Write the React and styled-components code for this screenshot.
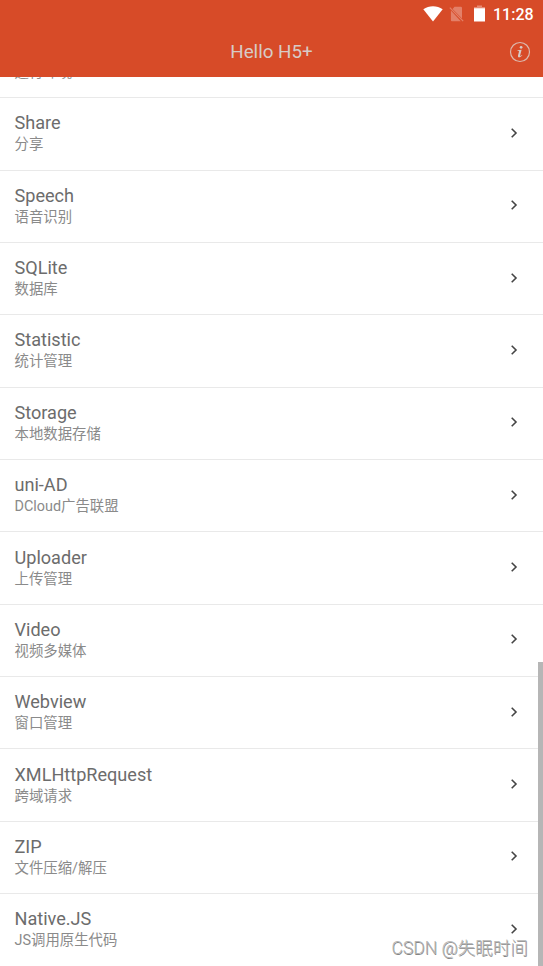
import React from "react";
import styled, { createGlobalStyle } from "styled-components";

const GlobalStyle = createGlobalStyle`
  * {
    box-sizing: border-box;
  }

  body {
    margin: 0;
    background: #fff;
    font-family: Roboto, "Noto Sans CJK SC", sans-serif;
  }
`;

const Screen = styled.div`
  position: relative;
  display: flex;
  flex-direction: column;
  width: 100%;
  height: 100vh;
  overflow: hidden;
`;

const Header = styled.header`
  flex: none;
  height: 77px;
  background: #d74b28;
`;

const StatusBar = styled.div`
  display: flex;
  align-items: center;
  justify-content: flex-end;
  height: 27px;
  padding-right: 9px;
  color: #fff;
`;

const WifiIcon = styled.svg`
  width: 20px;
  height: 16px;
  margin-right: 6px;
`;

const SimIcon = styled.svg`
  width: 15px;
  height: 16px;
  margin-right: 10px;
`;

const BatteryIcon = styled.svg`
  width: 11px;
  height: 17px;
  margin-right: 8px;
`;

const Clock = styled.span`
  width: 41px;
  padding-top: 1px;
  font-size: 16px;
  font-weight: 500;
  line-height: 27px;
  white-space: nowrap;
`;

const TitleBar = styled.div`
  display: grid;
  grid-template-columns: 44px 1fr 44px;
  align-items: center;
  height: 50px;
`;

const Title = styled.h1`
  grid-column: 2;
  margin: 0;
  font-size: 18.8px;
  font-weight: 400;
  text-align: center;
  color: #d7cbc7;
`;

const InfoIcon = styled.svg`
  width: 22px;
  height: 22px;
  justify-self: end;
  margin-right: 12px;
`;

const Content = styled.main`
  flex: 1;
  min-height: 0;
  overflow: hidden;
`;

// the list is scrolled to its end, so the first row is mostly hidden
const List = styled.ul`
  margin: -51.2px 0 0;
  padding: 0;
  list-style: none;
`;

const Row = styled.li`
  display: flex;
  align-items: center;
  justify-content: space-between;
  height: 72.37px;
  padding: 0 25px 0 14.5px;
  border-bottom: 1px solid #e9e9e9;

  &:last-child {
    border-bottom-color: transparent;
  }
`;

const Name = styled.div`
  font-size: 18.1px;
  line-height: 22px;
  color: #6c6c6c;
`;

const Description = styled.div`
  font-size: 14.4px;
  line-height: 21px;
  color: #8a8a8a;
`;

const Chevron = styled.svg`
  width: 8px;
  height: 10px;
  margin-bottom: 2px;
`;

const Scrollbar = styled.div`
  position: absolute;
  right: 0;
  bottom: 0;
  width: 5px;
  height: 304px;
  background: #b6b6b6;
`;

const Watermark = styled.div`
  position: absolute;
  right: 15px;
  bottom: 5px;
  font-size: 17.6px;
  font-weight: 300;
  line-height: 26px;
  white-space: nowrap;
  color: #b4b4b4;
  text-shadow: 0.6px 0.6px 0.5px #858585;
`;

const items = [
  { name: "Runtime", description: "运行环境" },
  { name: "Share", description: "分享" },
  { name: "Speech", description: "语音识别" },
  { name: "SQLite", description: "数据库" },
  { name: "Statistic", description: "统计管理" },
  { name: "Storage", description: "本地数据存储" },
  { name: "uni-AD", description: "DCloud广告联盟" },
  { name: "Uploader", description: "上传管理" },
  { name: "Video", description: "视频多媒体" },
  { name: "Webview", description: "窗口管理" },
  { name: "XMLHttpRequest", description: "跨域请求" },
  { name: "ZIP", description: "文件压缩/解压" },
  { name: "Native.JS", description: "JS调用原生代码" },
];

function ListRow({ name, description }) {
  return (
    <Row>
      <div>
        <Name>{name}</Name>
        <Description>{description}</Description>
      </div>
      <Chevron viewBox="0 0 8 10" fill="none">
        <path d="M1.7 0.8 6 5 1.7 9.2" stroke="#444" strokeWidth="1.6" />
      </Chevron>
    </Row>
  );
}

export default function App() {
  return (
    <Screen>
      <GlobalStyle />
      <Header>
        <StatusBar>
          <WifiIcon viewBox="0 0 20 16">
            <path d="M0.3 3.2C6-0.9 14-0.9 19.7 3.2L10 15.6Z" fill="#fff" />
          </WifiIcon>
          <SimIcon viewBox="0 0 15 16">
            <path
              d="M5.5 0.8H11.8Q13 0.8 13 2V12.4L3.6 3ZM1.9 4.6 11.8 15.2H2.9Q1.9 15.2 1.9 14Z"
              fill="#e38069"
            />
            <path d="M0.8 1.6 14.2 15.2" stroke="#e38069" strokeWidth="1.2" />
          </SimIcon>
          <BatteryIcon viewBox="0 0 11 17">
            <path d="M3 0.5H8V2H11V3.2H0V2H3Z" fill="#e78972" />
            <path d="M0 3.2H11V16.5H0Z" fill="#fff" />
          </BatteryIcon>
          <Clock>11:28</Clock>
        </StatusBar>
        <TitleBar>
          <Title>Hello H5+</Title>
          <InfoIcon viewBox="0 0 22 22" fill="none">
            <circle cx="11" cy="11" r="9.5" stroke="#dcb9ae" strokeWidth="1.2" />
            <circle cx="12.1" cy="6.3" r="1.35" fill="#d7cbc7" />
            <path
              d="M8.4 9.2 12.6 8.7 11.1 14.6Q11 15.5 13 14.1L13.3 14.6Q11.4 16.5 9.9 16.4 8.6 16.2 9 14.6L10.1 10.2Q10.2 9.7 8.4 9.8Z"
              fill="#d7cbc7"
            />
          </InfoIcon>
        </TitleBar>
      </Header>
      <Content>
        <List>
          {items.map((item) => (
            <ListRow key={item.name} {...item} />
          ))}
        </List>
      </Content>
      <Scrollbar />
      <Watermark>CSDN @失眠时间</Watermark>
    </Screen>
  );
}
